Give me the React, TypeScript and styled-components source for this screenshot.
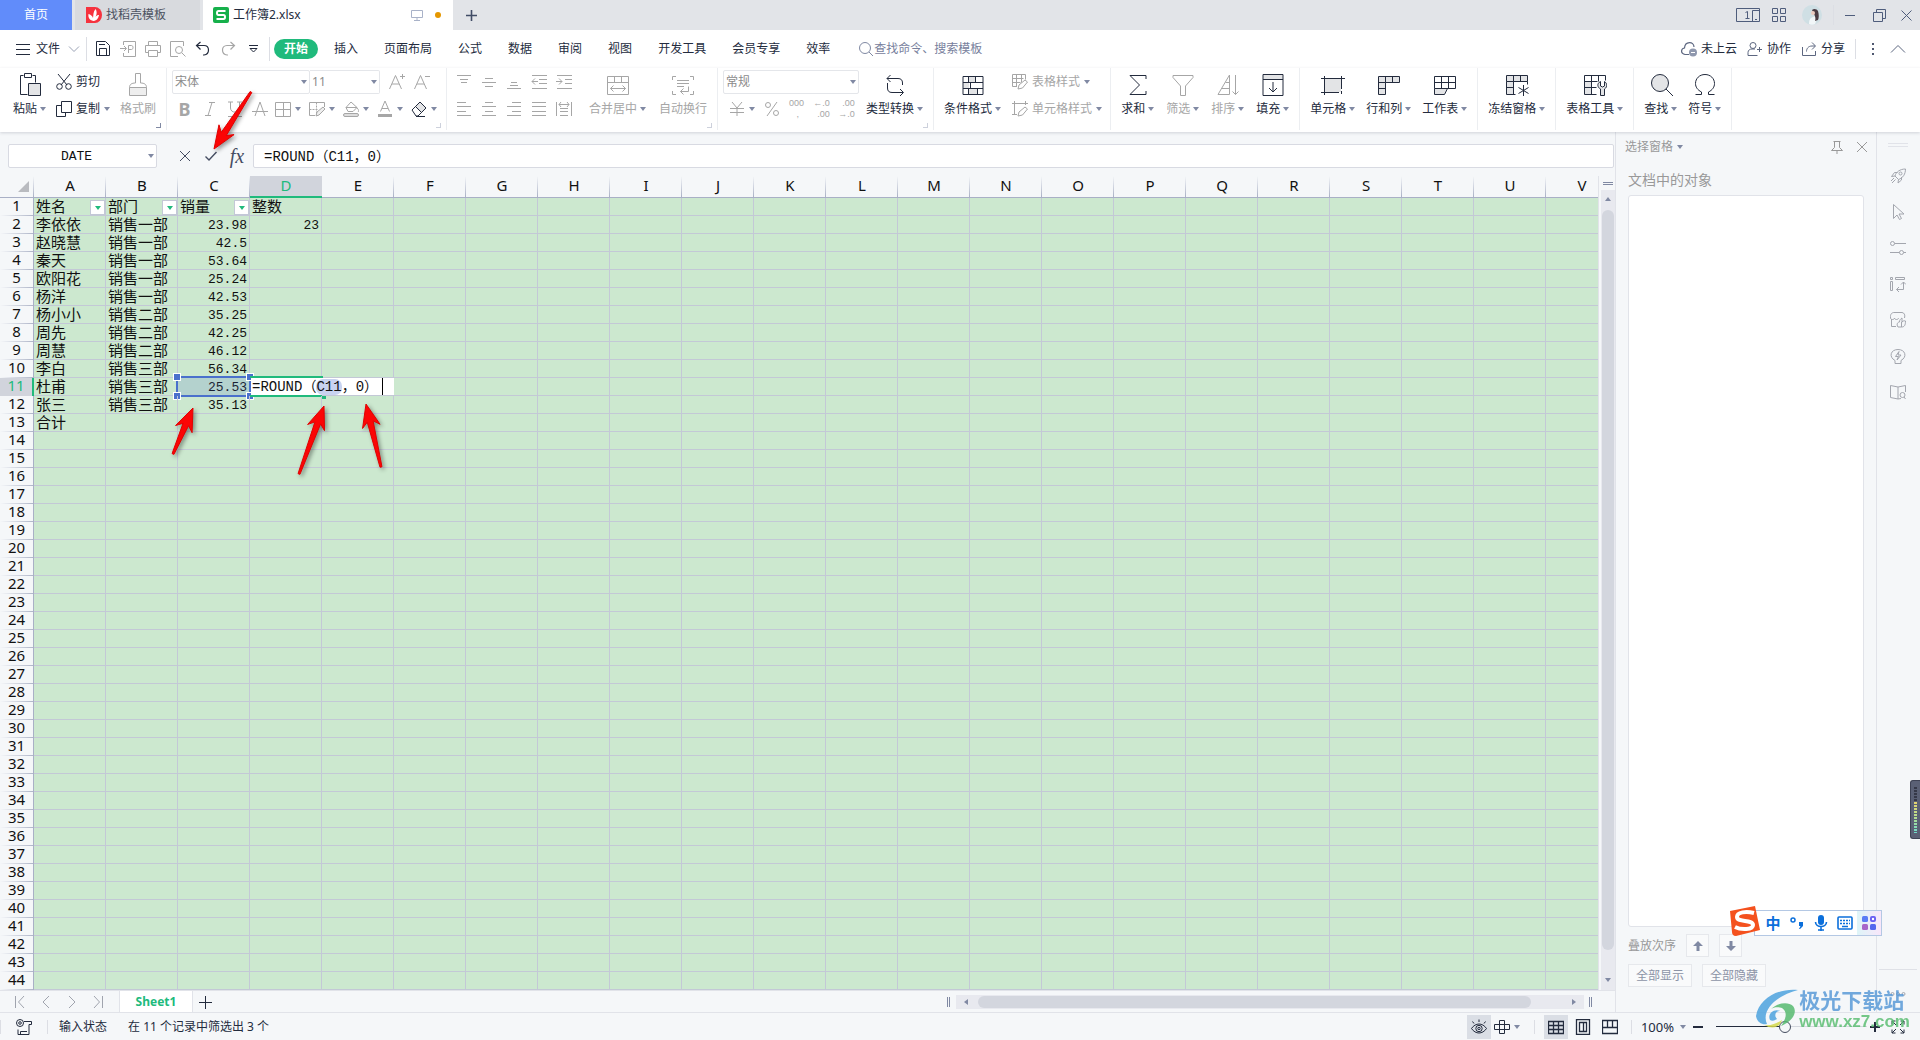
import React from "react";
import styled, { createGlobalStyle, css } from "styled-components";

const ui = `"Noto Sans", "Noto Sans CJK SC", sans-serif`;
const mono = `"Liberation Mono", "Noto Sans CJK SC", monospace`;
const ink = "#232b3d";
const muted = "#a6a6a6";
const green = "#20ba7c";
const line = "#c3c8d6";
const soft = "#e1e3e9";
const slate = "#8089a3";

const GlobalStyle = createGlobalStyle`
  *, *::before, *::after { box-sizing: border-box; }
  body { margin: 0; background: #f5f7f9; overflow: hidden; }
  button, input, select { font: inherit; color: inherit; margin: 0; }
  button { border: 0; padding: 0; background: none; }
  svg { display: block; flex: none; }
`;

const Page = styled.div`
  position: relative;
  display: flex;
  flex-direction: column;
  height: 100vh;
  overflow: hidden;
  background: #f5f7f9;
  color: ${ink};
  font-family: ${ui};
  font-size: 12px;
  line-height: 16px;
`;

/* ---------- icons ---------- */

type IconProps = { w?: number; h?: number; color?: string; children: React.ReactNode };
const Icon = ({ w = 16, h, color = "currentColor", children }: IconProps) => (
  <svg width={w} height={h ?? w} viewBox={`0 0 ${w} ${h ?? w}`} fill="none" stroke={color} strokeWidth="1" aria-hidden="true">
    {children}
  </svg>
);
const Caret = ({ color = slate }: { color?: string }) => (
  <Icon w={6} h={4}>
    <path d="M0 0h6L3 4z" fill={color} stroke="none" />
  </Icon>
);
const Shade = "#e3e4e6";

const big: Record<string, React.ReactNode> = {
  paste: (
    <>
      <path d="M5.500 3.500H2.500v19h7M14.500 3.500h3v7M6.500 1.500h7v4h-7z" />
      <path d="M10.500 11.500h12v12h-12z" fill={Shade} />
    </>
  ),
  brush: (
    <>
      <path d="M3.500 15.500h17v8h-17z" fill="#eee" />
      <path d="M3.500 15.500c0-3 2-4.500 6-4.500V1.500h5V11c4 0 6 1.500 6 4.500" />
    </>
  ),
  merge: <path d="M1.500 4.500h21v18h-21zM1.500 10.500h21M8.500 4.500v6M15.500 4.500v6M4.500 16.500h15M7.500 13.500l-3 3 3 3M16.500 13.500l3 3-3 3" />,
  wrap: (
    <path d="M5 4.500H1.500V8M19 4.500h3.500V8M5 22.500H1.500V19M19 22.500h3.500V19M6 8.500h12M6 11.500h12M6 14.500h7M17.500 14.500v5H9.500M12.500 16.500l-3 3 3 3" />
  ),
  convert: <path d="M7.500 3l-3.500 3.500L7.500 10M4 6.500h11c3 0 4.500 1.500 4.500 4.500v2M4.500 11v5c0 3 1.500 4.500 4.500 4.500h11M17 17l3.500 3.500L17 24" />,
  cond: (
    <>
      <path d="M7 5h7v5H7zM2 11h6v5H2zM7 17h9v5H7z" fill={Shade} stroke="none" />
      <path d="M2 4.500h20v18H2zM2 10.500h20M2 16.500h20M7.500 4.500v6M14.500 4.500v6M9.500 10.500v6M16.500 16.500v6M7.500 16.500v6" stroke="#232b3d" />
    </>
  ),
  sum: <path d="M20 7V3.500H4L13.500 13 4 22.500h16V19" />,
  filter: <path d="M2 3.500h20v2L14.500 14v9.500h-5V14L2 5.500z" />,
  sort: <path d="M13.500 3v19.500H2zM9.500 10.500h4M6 16.500h7.500M19.500 3v19.500M16.500 19.500l3 3 3-3" />,
  fill: (
    <>
      <path d="M2 3h20v5H2z" fill={Shade} stroke="none" />
      <path d="M2 2.500h20v21H2zM2 7.500h20M12 10v10M8 16l4 4 4-4" />
    </>
  ),
  cell: (
    <>
      <path d="M4 6h16v14H4z" fill={Shade} stroke="none" />
      <path d="M3.500 4v19M20.500 4v13M0 6.500h24M0 20.500h18M20.500 19v3" />
    </>
  ),
  rowcol: (
    <>
      <path d="M1 5h21v5H8v12H1z" fill={Shade} stroke="none" />
      <path d="M1.500 4.500h21v6h-14v12h-7zM8.500 4.500v6h-7M15.500 4.500v6M1.500 16.500h7" />
    </>
  ),
  sheet: (
    <>
      <path d="M2 17h12l-2 5H2z" fill={Shade} stroke="none" />
      <path d="M1.500 4.500h21v12h-21zM1.500 10.500h21M8.500 4.500v12M15.500 4.500v12M1.500 16.500v6h10l3-6" />
    </>
  ),
  freeze: (
    <>
      <path d="M1 4h21v5H8v13H1z" fill={Shade} stroke="none" />
      <path d="M1.500 3.500h21v6h-21zM1.500 9.500v13h9M8.500 3.500v19M15.500 3.500v6M1.500 15.500h7M22.500 9.500v3M18.500 13v11M13.500 15.500l10 6M23.500 15.500l-10 6" />
    </>
  ),
  tools: (
    <>
      <path d="M2 10h6v12H2z" fill={Shade} stroke="none" />
      <path d="M1.500 3.500h21v5M1.500 3.500v19h12M1.500 9.500h13M8.500 3.500v19M15.500 3.500v6M1.500 15.500h12" />
      <path d="M17.500 9.500c-4 2-3 6 0 7.500v6.500h4V17c3-2 3-5.500 0-7.500v4.500l-2 1-2-1z" fill={Shade} />
    </>
  ),
  find: (
    <>
      <circle cx="11" cy="11" r="8.500" fill={Shade} />
      <path d="M17 17l7 7" />
    </>
  ),
  omega: <path d="M2.500 22.500h6v-2.500C4.500 18 2.500 15 2.500 11.500c0-5 4-9 9.500-9s9.500 4 9.500 9c0 3.500-2 6.500-6 8.500v2.500h6" />,
};

const small: Record<string, React.ReactNode> = {
  cut: (
    <>
      <path d="M2 0l9 11M14 0L5 11" />
      <circle cx="3.500" cy="12.500" r="2.800" />
      <circle cx="12.500" cy="12.500" r="2.800" />
    </>
  ),
  copy: <path d="M5.500.500h10v11h-10zM5.500 4.500h-5v11h9v-4" />,
  italic: <path d="M7 1.500h6M3 14.500h6M10 1.500l-4 13" />,
  underline: <path d="M3.500 1v6c0 5.500 9 5.500 9 0V1M1 1h5M10 1h5M1 15.500h14" />,
  strike: <path d="M3 15L8 1l5 14M0 10.500h16" />,
  border: <path d="M.500 1.500h15v14H.500zM8.500 1.500v14M.500 8.500h15" />,
  edit: (
    <>
      <path d="M15.500 6V1.500H.500v13H6" />
      <path d="M.500 8.500h9M7.500 1.500v13" strokeDasharray="2 1" />
      <path d="M7 15l1-4 6-5 2 2-6 6z" fill="#eee" />
    </>
  ),
  bucket: (
    <>
      <path d="M3 6.500L8 1l6 5.500-4 4H5zM3 6.500h11M14 7c2 2 2 3 1 4" />
      <rect x=".5" y="12.500" width="15" height="3" rx="1.500" fill="#ddd" />
    </>
  ),
  fontcolor: (
    <>
      <path d="M3.500 10.500L8 0l4.500 10.500M5 7.500h6" />
      <path d="M1 13h14v3H1z" fill="#a6a6a6" stroke="none" />
    </>
  ),
  eraser: (
    <>
      <path d="M1 9l8-8 6 6-8 8H5z" />
      <path d="M4.500 5.500L9 1l6 6-4.500 4.500z" fill={Shade} />
      <path d="M5 15.500h9" />
    </>
  ),
  bigger: <path d="M.500 15L6.500 1.500l6 13.500M3 10h7M11 2.500h5M13.500 0v5" />,
  smaller: <path d="M.500 15L6.500 1.500l6 13.500M3 10h7M11 2.500h5" />,
  vtop: <path d="M1 1.500h14M4 5.500h8M5 8.500h6" />,
  vmid: <path d="M4 4.500h8M1 8.500h14M4 12.500h8" />,
  vbot: <path d="M5 8.500h6M4 11.500h8M1 14.500h14" />,
  outdent: <path d="M1 1.500h15M8 5.500h8M8 9.500h8M1 14.500h15M7 7.500H1M4 4.500l-3 3 3 3" />,
  indent: <path d="M1 1.500h15M9 5.500h7M9 9.500h7M1 14.500h15M0 7.500h6M3 4.500l3 3-3 3" />,
  left: <path d="M1 1.500h9M1 5.500h14M1 10.500h9M1 14.500h14" />,
  center: <path d="M4 1.500h8M1 5.500h14M4 10.500h8M1 14.500h14" />,
  right: <path d="M6 1.500h9M1 5.500h14M6 10.500h9M1 14.500h14" />,
  justify: <path d="M1 1.500h14M1 5.500h14M1 10.500h14M1 14.500h14" />,
  spread: <path d="M.500 1v14M15.500 1v14M4 7.500h8M4 10.500h8M4 14.500h8M3 3.500h10M5 1L3 3.500 5 6M11 1l2 2.500L11 6" />,
  yen: <path d="M3 1l5 6 5-6M8 7v8M1 7.500h14M1 11.500h14" />,
  percent: (
    <>
      <path d="M13 1L3 15" />
      <circle cx="4" cy="4" r="2.500" />
      <circle cx="12" cy="12" r="2.500" />
    </>
  ),
  tablestyle: <path d="M.500.500h13v5M.500.500v12H5M.500 4.500h11M.500 8.500h8M4.500.500v12M9.500.500v8M6 15l1-4 6-5 2.500 2-5 6z" />,
  cellstyle: <path d="M2.500 0v14M0 2.500h16M13.500 0v4M0 13.500h5M6 15l1-4 6-5 2.500 2-5 6z" />,
  save: <path d="M1.500.500h9l4 4v10h-13zM4.500 14.500v-7h7v7M4 3.500h6" />,
  export: <path d="M3.500 4V.500h12v15h-12V12M0 7.500h6M4 5l2.500 2.500L4 10M8.500 12V4.500h3c2 0 2 4 0 4h-3" />,
  print: <path d="M3.500 4.500v-4h9v4M3.500 11.500h-3v-7h15v7h-3M3.500 9.500h9v6h-9z" />,
  preview: (
    <>
      <path d="M13.500 5V.500H.500v15H8" />
      <circle cx="9" cy="9" r="3.500" />
      <path d="M12 12l3.500 3.500" />
    </>
  ),
  undo: <path d="M5.500 1l-4 3.500 4 4M1.500 4.500H9c6 0 6 9 0 9.500H8" strokeWidth="1.200" />,
  redo: <path d="M10.500 1l4 3.500-4 4M14.500 4.500H7c-6 0-6 9 0 9.500h1" strokeWidth="1.200" />,
  search: (
    <>
      <circle cx="7" cy="7" r="5.500" />
      <path d="M11 11l4 4" />
    </>
  ),
  cloud: (
    <>
      <path d="M8 13.500H4c-5-1-4-6-.500-6.500C4 0 13 0 13 6" strokeWidth="1.200" />
      <circle cx="12" cy="11.500" r="4" fill="#8f98ae" stroke="none" />
      <path d="M10 11.500h4" stroke="#fff" />
    </>
  ),
  person: (
    <>
      <circle cx="6" cy="4.500" r="3" />
      <path d="M10.500 14.500h-9.500v-3c0-2.500 2-3.500 4-3.500h3M10 8.500h5M12.500 6v5" />
    </>
  ),
  share: <path d="M1.500 6v8.500h13V10M11 1.500l3.500 3.500L11 8.500M14 5H11C7 5 5.500 8 5.500 10.500" />,
  rocket: (
    <>
      <path d="M5 8c1-4 5-7 10.500-7C15.500 6 13 10 8.500 11.500zM5 8L1.500 8.500l3-4h3M8.500 11.500L8 15l3.500-3V9M4 10l-3 3M5.500 11.500L2 15" />
      <circle cx="10.500" cy="5.500" r="1.500" />
    </>
  ),
  pointer: <path d="M3.500.500v14l3.500-3.500 2.500 4.500 2-1-2.500-4.500h5z" />,
  sliders: (
    <>
      <circle cx="2.500" cy="3.500" r="2" />
      <path d="M4.500 3.500H16M0 12.500h9.500M13.500 12.500H16" />
      <circle cx="11.500" cy="12.500" r="2" />
    </>
  ),
  layout: <path d="M.500 1.500h2v2h-2zM5.500 1.500h9v2h-9zM.500 5.500h2v9h-2zM13.500 6v7.500h-7M11 8.500L13.500 6 16 8.500M9 11l-2.500 2.500L9 16" />,
  shop: <path d="M1.500 7v7.500H6M.500 6C0 2 2 .500 4 .500h8C14 .500 15.500 3 14.500 6M.500 6c0 2 4 2 4 0 0 2 4 2 4 0M8 15c-2-3 0-5 1.500-5 0-2 1-3 2.500-4v4c2-2 3-1 3.500-1 0 4-1 6-4 6zM11.500 15v-5" />,
  bulb: (
    <>
      <path d="M5 12.500C-1.500 9 .500 1.500 8 1.500s9.500 7.500 3 11v3H5z" />
      <path d="M9 3.500L5.500 8.500h3L7 12l4-5H8z" />
    </>
  ),
  book: (
    <>
      <path d="M8 3L.500 1.500v12L8 15l3-.500M8 3v12M8 3l7.500-1.500V8" />
      <circle cx="12.500" cy="11" r="2.500" />
      <path d="M14 13l1.500 2" />
    </>
  ),
  close: <path d="M3 3l10 10M13 3L3 13" />,
  pin: <path d="M4.500 2.500h7M5.500 2.500v6l-3 3h11l-3-3v-6M8 11.500V15" />,
  check: <path d="M2.500 8.500L6 12l7.500-8" strokeWidth="1.400" />,
  up: <path d="M8 3l5 5h-3.500v5h-3V8H3z" fill="#8089a3" stroke="none" />,
  down: <path d="M8 13l5-5H9.500V3h-3v5H3z" fill="#8089a3" stroke="none" />,
  first: <path d="M3.500 2v12M12 2L6.500 8l5.500 6" />,
  prev: <path d="M11 2L5 8l6 6" />,
  next: <path d="M5 2l6 6-6 6" />,
  last: <path d="M12.500 2v12M4 2l5.500 6L4 14" />,
  plus: <path d="M8.500 2v13M2 8.500h13" />,
  chevron: <path d="M3 5.500l5 5 5-5" />,
  chevronUp: <path d="M1 11.500l7-7 7 7" />,
  record: (
    <>
      <circle cx="4" cy="4" r="3.500" />
      <circle cx="4" cy="4" r="1.300" />
      <path d="M8 2.500h7.500v3H13v10H4.500v-3H11" />
      <path d="M2 10.500v5h3" />
    </>
  ),
  eye: (
    <>
      <path d="M.500 9.500c4-6 11-6 15 0-4 6-11 6-15 0z" />
      <circle cx="8" cy="9.500" r="3.200" />
      <circle cx="8" cy="9.500" r="1.200" />
      <path d="M8 3V.500M3 4.500L1.500 2.500M13 4.500l1.500-2" />
    </>
  ),
  cross: <path d="M5.500 1.500h5v13h-5zM.500 5.500h15v5H.500z" />,
  grid: <path d="M.500 2.500h15v12H.500zM.500 6.500h15M.500 10.500h15M5.500 2.500v12M10.500 2.500v12" strokeWidth="1.300" />,
  reading: <path d="M1.500.500h13v15h-13zM4.500 3.500h7v9h-7zM8.500 3.500v9" strokeWidth="1.300" />,
  pagebreak: <path d="M.500 1.500h15v13H.500zM5.500 1.500v7h5v-7M.500 8.500h5M10.500 8.500h5" strokeWidth="1.300" />,
  expand: <path d="M2 2l4 4M2 5.500V2h3.500M14 2l-4 4M14 5.500V2h-3.500M2 14l4-4M2 10.500V14h3.500M14 14l-4-4M14 10.500V14h-3.500" />,
};

const B = ({ name, color }: { name: string; color?: string }) => <Icon w={24} color={color}>{big[name]}</Icon>;
const S = ({ name, color }: { name: string; color?: string }) => <Icon w={16} color={color}>{small[name]}</Icon>;

/* ---------- title bar ---------- */

const TitleBar = styled.header`
  display: flex;
  height: 30px;
  flex: none;
  background: #e2e4e8;
`;
const DocTab = styled.button<{ $kind?: "home" | "active" }>`
  display: flex;
  align-items: center;
  gap: 4px;
  height: 30px;
  width: 125px;
  padding: 0 11px;
  margin-right: 3px;
  background: #d8dade;
  color: #4c5261;
  ${(p) => p.$kind === "home" && css`width: 72px; justify-content: center; background: #618cfa; color: #fff;`}
  ${(p) => p.$kind === "active" && css`width: 250px; padding: 0 12px 0 10px; margin-right: 0; background: #fff; color: ${ink};`}
`;
const Dot = styled.span`
  width: 6px;
  height: 6px;
  margin-left: 8px;
  border-radius: 50%;
  background: #e59700;
`;
const Grow = styled.span`
  flex: 1;
`;
const Square = styled.button<{ $w?: number; $h?: number; $on?: boolean; $color?: string }>`
  display: flex;
  align-items: center;
  justify-content: center;
  flex: none;
  width: ${(p) => p.$w ?? 24}px;
  height: ${(p) => p.$h ?? 24}px;
  color: ${(p) => p.$color ?? "inherit"};
  background: ${(p) => (p.$on ? "#dadee5" : "none")};
`;
const WindowTools = styled.div`
  display: flex;
  align-items: center;
  margin-left: auto;
  color: #4f5d7c;
`;
const Divider = styled.span<{ $h?: number; $gap?: number }>`
  flex: none;
  width: 1px;
  height: ${(p) => p.$h ?? 24}px;
  margin: 0 ${(p) => p.$gap ?? 4}px;
  background: #dcdee4;
`;

/* ---------- menu row ---------- */

const MenuRow = styled.nav`
  display: flex;
  align-items: center;
  flex: none;
  height: 38px;
  padding: 0 14px 0 16px;
  background: #fff;
`;
const FileButton = styled.button`
  display: flex;
  align-items: center;
  gap: 6px;
`;
const QuickBar = styled.div`
  display: flex;
  gap: 1px;
`;
const MenuTabs = styled.div`
  display: flex;
  gap: 6px;
`;
const MenuTab = styled.button<{ $on?: boolean }>`
  height: 20px;
  padding: 0 10px;
  border-radius: 10px;
  line-height: 20px;
  ${(p) => p.$on && css`background: ${green}; color: #fff; font-weight: 700;`}
`;
const Search = styled.label`
  display: flex;
  align-items: center;
  margin-left: 18px;
  color: #8089a3;
`;
const SearchInput = styled.input`
  width: 140px;
  border: 0;
  padding: 0;
  outline: 0;
  background: none;
  &::placeholder { color: #77809c; opacity: 1; }
`;
const TextButton = styled.button<{ $color?: string }>`
  display: flex;
  align-items: center;
  gap: 4px;
  height: 24px;
  white-space: nowrap;
  color: ${(p) => p.$color ?? "inherit"};
`;
const AccountTools = styled.div`
  display: flex;
  align-items: center;
  gap: 10px;
  margin-left: auto;
`;

/* ---------- ribbon ---------- */

const Ribbon = styled.div`
  position: relative;
  z-index: 1;
  display: flex;
  flex: none;
  height: 64px;
  padding-bottom: 2px;
  background: #fff;
  box-shadow: 0 1px 3px rgba(40, 50, 70, 0.18);
`;
const Group = styled.div<{ $left?: number; $right?: number; $gap?: number }>`
  position: relative;
  display: flex;
  gap: ${(p) => p.$gap ?? 11}px;
  padding: 0 ${(p) => p.$right ?? 10}px 0 ${(p) => p.$left ?? 10}px;
  border-right: 1px solid #eceef1;
`;
const Launcher = styled.span<{ $dark?: boolean }>`
  position: absolute;
  right: 5px;
  bottom: 2px;
  width: 5px;
  height: 5px;
  border: solid ${(p) => (p.$dark ? slate : "#cdd1dc")};
  border-width: 0 1px 1px 0;
`;
const BigButton = styled.button<{ $off?: boolean }>`
  display: flex;
  flex-direction: column;
  align-items: center;
  gap: 5px;
  padding-top: 4px;
  align-self: flex-start;
  white-space: nowrap;
  color: ${(p) => (p.$off ? muted : ink)};
`;
const BigLabel = styled.span`
  display: flex;
  align-items: center;
  gap: 3px;
`;
const Rows = styled.div`
  display: grid;
  align-content: start;
  grid-auto-rows: 24px;
  gap: 3px;
  padding-top: 2px;
`;
const Row = styled.div`
  display: flex;
  align-items: center;
  color: ${muted};
`;
const SplitButton = styled.button<{ $w?: number; $color?: string }>`
  display: flex;
  align-items: center;
  gap: 4px;
  width: ${(p) => p.$w ?? 34}px;
  height: 24px;
  padding-left: ${(p) => (p.$w ? 6 : 3)}px;
  color: ${(p) => p.$color ?? muted};
`;
const Bold = styled.span`
  font-size: 18px;
  font-weight: 700;
`;
const Decimal = styled.span`
  display: grid;
  justify-items: end;
  font: 9px/11px "Liberation Sans", "DejaVu Sans", sans-serif;
`;
const Field = styled.span<{ $w: number }>`
  position: relative;
  display: flex;
  align-items: center;
  width: ${(p) => p.$w}px;
  height: 24px;
  border: 1px solid #e4e6ea;
  border-radius: 2px;
  color: #8b8b8b;
  & + & { border-left: 0; border-radius: 0 2px 2px 0; }
  & > svg { position: absolute; right: 2px; }
`;
const Select = styled.select`
  width: 100%;
  height: 22px;
  padding: 0 2px;
  border: 0;
  outline: 0;
  appearance: none;
  background: none;
`;

const BigItem = ({ icon, label, off, caret = true }: { icon: string; label: string; off?: boolean; caret?: boolean }) => (
  <BigButton $off={off}>
    <B name={icon} />
    <BigLabel>
      {label}
      {caret && <Caret />}
    </BigLabel>
  </BigButton>
);
const Drop = ({ w, label, value }: { w: number; label: string; value: string }) => (
  <Field $w={w}>
    <Select aria-label={label} defaultValue={value}>
      <option>{value}</option>
    </Select>
    <Caret />
  </Field>
);

/* ---------- workspace ---------- */

const Workspace = styled.div`
  display: flex;
  flex: 1;
  min-height: 0;
`;
const SheetArea = styled.main`
  display: flex;
  flex-direction: column;
  flex: 1;
  min-width: 0;
`;
const FormulaBar = styled.div`
  display: flex;
  align-items: center;
  flex: none;
  height: 44px;
  padding: 4px 1px 0 8px;
`;
const NameBox = styled.label`
  position: relative;
  display: flex;
  align-items: center;
  flex: none;
  width: 149px;
  & > svg { position: absolute; right: 3px; }
`;
const BoxInput = styled.input<{ $name?: boolean }>`
  width: 100%;
  min-width: 0;
  height: 24px;
  padding: 0 10px 2px;
  border: 1px solid #d8dae2;
  border-radius: 2px;
  outline: 0;
  background: #fff;
  color: #111;
  font-family: ${mono};
  font-size: ${(p) => (p.$name ? 13 : 14)}px;
  ${(p) => p.$name && css`text-align: center; padding: 0 22px 0 10px;`}
`;
const FormulaButtons = styled.div`
  display: flex;
  flex: none;
  width: 96px;
  padding-left: 15px;
  color: #454d62;
`;
const Fx = styled.span`
  font: italic 20px/24px "Liberation Serif", serif;
`;
const GridRow = styled.div`
  display: flex;
  flex: 1;
  min-height: 0;
`;
const GridView = styled.div`
  flex: 1;
  min-width: 0;
  overflow: hidden;
  border-right: 1px solid ${soft};
`;
const Grid = styled.table`
  width: 1618px;
  table-layout: fixed;
  border-collapse: separate;
  border-spacing: 0;
  background: #cce8cf;
`;
const ColHead = styled.th<{ $on?: boolean }>`
  height: 22px;
  padding: 0;
  border-bottom: 1px solid #a9b0c6;
  background: linear-gradient(#f5f7f9, #aab1c6) right / 1px 100% no-repeat, #f5f7f9;
  font-size: 15px;
  font-weight: 400;
  line-height: 18px;
  vertical-align: top;
  color: #111;
  ${(p) => p.$on && css`background: #d1d4dc; border-bottom: 2px solid ${green}; color: ${green};`}
`;
const RowHead = styled.th<{ $on?: boolean }>`
  height: 18px;
  padding: 0;
  border-right: 1px solid #a9b0c6;
  background: linear-gradient(90deg, #f5f7f9, #b0b6c9) bottom / 100% 1px no-repeat, #f5f7f9;
  font-size: 15px;
  font-weight: 400;
  line-height: 15px;
  vertical-align: top;
  color: #111;
  ${(p) => p.$on && css`background: #d1d4dc; border-right: 2px solid ${green}; color: ${green};`}
`;
const Cell = styled.td<{ $num?: boolean }>`
  position: relative;
  height: 18px;
  padding: 0 2px;
  border: solid ${line};
  border-width: 0 1px 1px 0;
  white-space: nowrap;
  vertical-align: top;
  color: #111;
  font: 15px/15px "Noto Sans CJK SC", sans-serif;
  ${(p) => p.$num && css`padding-top: 2px; font: 13px/15px ${mono}; text-align: right;`}
`;
const FilterButton = styled.button`
  position: absolute;
  right: 0;
  top: 2px;
  display: flex;
  align-items: center;
  justify-content: center;
  width: 15px;
  height: 15px;
  border: 1px solid ${line};
  background: #fff;
`;
const RefFrame = styled.span`
  position: absolute;
  inset: -2px -2px -2px -2px;
  border: 2px solid #4a70cc;
  background: rgba(74, 112, 204, 0.18);
`;
const Knob = styled.i<{ $x: "left" | "right"; $y: "top" | "bottom" }>`
  position: absolute;
  ${(p) => p.$x}: -4px;
  ${(p) => p.$y}: -4px;
  width: 6px;
  height: 6px;
  background: #4a70cc;
  outline: 1px solid #fff;
`;
const EditFrame = styled.span`
  position: absolute;
  inset: -2px -2px -2px 0;
  border: solid ${green};
  border-width: 2px 0;
  &::after {
    content: "";
    position: absolute;
    right: -3px;
    bottom: -4px;
    width: 5px;
    height: 5px;
    background: ${green};
  }
`;
const Editor = styled.span`
  position: absolute;
  z-index: 1;
  left: 1px;
  top: 0;
  width: 143px;
  height: 17px;
  padding-left: 1px;
  background: #fff;
  font: 14px/19px ${mono};
`;
const Ref = styled.span`
  border-radius: 7px;
  background: #c8d3f0;
  color: #111;
`;
const TextCursor = styled.i`
  display: inline-block;
  width: 1px;
  height: 17px;
  margin-left: 4px;
  vertical-align: top;
  background: #000;
`;
const VScroll = styled.div`
  display: flex;
  flex-direction: column;
  align-items: center;
  flex: none;
  width: 16px;
  padding-left: 2px;
`;
const Grip = styled.span<{ $vertical?: boolean }>`
  flex: none;
  width: 10px;
  height: 3px;
  margin: 6px 0 5px;
  border: solid ${slate};
  border-width: 1px 0;
  ${(p) => p.$vertical && css`width: 3px; height: 10px; margin: 0 6px 0 5px; border-width: 0 1px;`}
`;
const VTrack = styled.div`
  display: flex;
  flex-direction: column;
  align-items: center;
  gap: 9px;
  flex: 1;
  width: 14px;
  padding: 7px 0 8px;
  background: #e8e9ef;
`;
const VThumb = styled.span`
  flex: 1;
  width: 12px;
  margin-bottom: 19px;
  border-radius: 6px;
  background: #d3d6de;
`;
const SheetBar = styled.div`
  display: flex;
  align-items: center;
  flex: none;
  height: 22px;
  padding-left: 8px;
  border-top: 1px solid ${soft};
`;
const SheetNav = styled.div`
  display: flex;
  gap: 2px;
  width: 111px;
  color: #a0a4ae;
`;
const SheetTab = styled.button`
  width: 74px;
  height: 21px;
  border: solid ${soft};
  border-width: 0 1px;
  background: #fff;
  color: ${green};
  font-weight: 700;
`;
const HScroll = styled.div`
  display: flex;
  align-items: center;
  gap: 10px;
  width: 628px;
  height: 14px;
  padding: 0 8px;
  background: #e8e9ef;
`;
const HThumb = styled.span`
  flex: 1;
  height: 12px;
  margin-right: 31px;
  border-radius: 6px;
  background: #d3d6de;
`;

/* ---------- selection pane ---------- */

const Pane = styled.aside`
  display: flex;
  flex-direction: column;
  flex: none;
  width: 262px;
  padding: 5px 12px 25px;
  border: solid ${soft};
  border-width: 0 1px;
  color: #999;
`;
const PaneHead = styled.div`
  display: flex;
  align-items: center;
  gap: 1px;
  height: 20px;
  margin: 0 -10px 0 -3px;
`;
const PaneTitle = styled.h2`
  margin: 14px 0 6px;
  font-size: 14px;
  font-weight: 400;
  line-height: 18px;
`;
const ObjectList = styled.div`
  flex: 1;
  border: 1px solid ${soft};
  border-radius: 3px;
  background: #fff;
`;
const PaneRow = styled.div`
  display: flex;
  align-items: center;
  gap: 10px;
  margin-top: 7px;
`;
const PaneButton = styled.button<{ $w?: number }>`
  display: flex;
  align-items: center;
  justify-content: center;
  width: ${(p) => p.$w ?? 64}px;
  height: 23px;
  border: 1px solid #e6e8ec;
  background: #f9fafb;
  color: #8c93a6;
`;
const SideBar = styled.aside`
  display: flex;
  flex-direction: column;
  align-items: center;
  flex: none;
  width: 43px;
  padding: 11px 2px 10px 0;
  color: #a3a6ae;
`;
const Handle = styled.span`
  width: 20px;
  height: 4px;
  margin-bottom: 11px;
  border: solid ${soft};
  border-width: 1px 0;
`;
const SideRule = styled.span`
  width: 38px;
  height: 1px;
  margin-top: auto;
  margin-bottom: 16px;
  background: #dfe1e7;
`;

/* ---------- status bar ---------- */

const StatusBar = styled.footer`
  display: flex;
  align-items: center;
  flex: none;
  height: 28px;
  padding: 0 7px 0 0;
  border-top: 1px solid ${soft};
`;
const Zoom = styled.button`
  display: flex;
  align-items: center;
  gap: 6px;
  font-size: 13px;
`;
const Slider = styled.input`
  width: 151px;
  height: 16px;
  margin: 0 0 0 6px;
  appearance: none;
  background: linear-gradient(90deg, ${ink} 46%, #d4d7de 46%) center / 100% 1px no-repeat;
  &::-webkit-slider-thumb {
    appearance: none;
    width: 12px;
    height: 12px;
    border: 1px solid #444c5f;
    border-radius: 50%;
    background: #f5f7f9;
  }
`;

/* ---------- floating layers ---------- */

const ImeBar = styled.div`
  position: absolute;
  z-index: 3;
  right: 38px;
  bottom: 104px;
  display: flex;
  align-items: center;
  height: 26px;
  border: 1px solid #b4c8e4;
  background: #fff;
`;
const ImeLogo = styled.span`
  margin: -6px 0 -4px -28px;
`;
const ImeKey = styled(Square)`
  color: #0b6fdb;
  font-size: 15px;
  font-weight: 700;
`;
const ImeApps = styled(ImeKey)`
  background: linear-gradient(90deg, #def5f8, #f8e6fa);
`;
const SideWidget = styled.div`
  position: absolute;
  z-index: 3;
  right: 0;
  bottom: 201px;
  width: 10px;
  height: 59px;
  padding: 6px 3px;
  border: 1px solid #3e4254;
  border-right: 0;
  border-radius: 3px 0 0 3px;
  background: #5a6075;
`;
const Meter = styled.span`
  display: block;
  height: 46px;
  background: repeating-linear-gradient(transparent 0 2px, #5a6075 2px 3px), linear-gradient(#353848 30%, #e8d16c 30%, #b6dd8d 65%, #6edacb);
`;
const Watermark = styled.div`
  position: absolute;
  z-index: 4;
  right: 10px;
  bottom: 8px;
  display: flex;
  align-items: center;
  pointer-events: none;
  opacity: 0.85;
`;
const WatermarkText = styled.div`
  display: grid;
  color: #5b9bd8;
  font: 700 21px/25px "Noto Sans CJK SC", sans-serif;
`;
const WatermarkUrl = styled.span`
  color: #5ebf75;
  font: 700 17px/20px "Liberation Sans", sans-serif;
`;
const Notes = styled.svg`
  position: absolute;
  z-index: 5;
  left: 0;
  top: 0;
  width: 440px;
  height: 500px;
  pointer-events: none;
  filter: drop-shadow(2px 2px 2px rgba(0, 0, 0, 0.4));
`;

type Point = [number, number];
const Arrow = ({ tail, tip }: { tail: Point; tip: Point }) => {
  const dx = tail[0] - tip[0];
  const dy = tail[1] - tip[1];
  const len = Math.hypot(dx, dy);
  const at = (along: number, side: number) =>
    `${tip[0] + (dx * along - dy * side) / len},${tip[1] + (dy * along + dx * side) / len}`;
  const points = [at(0, 0), at(23, 9), at(18, 3), at(len, 1), at(len, -1), at(18, -3), at(23, -9)].join(" ");
  return <polygon points={points} fill="#fb0505" stroke="#e00000" strokeWidth="1" />;
};

const columns = "ABCDEFGHIJKLMNOPQRSTUV".split("");
const data: string[][] = [
  ["姓名", "部门", "销量", "整数"],
  ["李依依", "销售一部", "23.98", "23"],
  ["赵晓慧", "销售一部", "42.5"],
  ["秦天", "销售一部", "53.64"],
  ["欧阳花", "销售一部", "25.24"],
  ["杨洋", "销售一部", "42.53"],
  ["杨小小", "销售二部", "35.25"],
  ["周先", "销售二部", "42.25"],
  ["周慧", "销售二部", "46.12"],
  ["李白", "销售三部", "56.34"],
  ["杜甫", "销售三部", "25.53"],
  ["张三", "销售三部", "35.13"],
  ["合计"],
];
const rowCount = 44;

const SheetCell = ({ r, c }: { r: number; c: number }) => {
  const value = data[r]?.[c] ?? "";
  const numeric = r > 0 && c > 1;
  return (
    <Cell $num={numeric && value !== ""}>
      {value}
      {r === 0 && c < 3 && (
        <FilterButton aria-label={`筛选 ${value}`}>
          <Caret color={green} />
        </FilterButton>
      )}
      {r === 10 && c === 2 && (
        <RefFrame>
          <Knob $x="left" $y="top" />
          <Knob $x="right" $y="top" />
          <Knob $x="left" $y="bottom" />
          <Knob $x="right" $y="bottom" />
        </RefFrame>
      )}
      {r === 10 && c === 3 && (
        <>
          <EditFrame />
          <Editor>
            =ROUND（<Ref>C11</Ref>，0）
            <TextCursor />
          </Editor>
        </>
      )}
    </Cell>
  );
};

const Ribbons = () => (
  <Ribbon>
    <Group $left={13} $gap={10}>
      <BigItem icon="paste" label="粘贴" />
      <Rows>
        <TextButton><S name="cut" />剪切</TextButton>
        <TextButton><S name="copy" />复制<Caret /></TextButton>
      </Rows>
      <BigItem icon="brush" label="格式刷" off caret={false} />
      <Launcher $dark />
    </Group>
    <Group $left={5} $right={4}>
      <Rows>
        <Row>
          <Drop w={138} label="字体" value="宋体" />
          <Drop w={70} label="字号" value="11" />
          <Square $w={34} aria-label="增大字号"><S name="bigger" /></Square>
          <Square $w={16} aria-label="减小字号"><S name="smaller" /></Square>
        </Row>
        <Row>
          <Square $w={25}><Bold>B</Bold></Square>
          <Square $w={25} aria-label="斜体"><S name="italic" /></Square>
          <Square $w={25} aria-label="下划线"><S name="underline" /></Square>
          <Square $w={25} aria-label="删除线"><S name="strike" /></Square>
          {["border", "edit", "bucket", "fontcolor"].map((n) => (
            <SplitButton key={n} aria-label={n}><S name={n} /><Caret /></SplitButton>
          ))}
          <SplitButton $color={ink} aria-label="清除"><S name="eraser" /><Caret /></SplitButton>
        </Row>
      </Rows>
      <Launcher />
    </Group>
    <Group $left={4} $gap={13}>
      <Rows>
        {[["vtop", "vmid", "vbot", "outdent", "indent"], ["left", "center", "right", "justify", "spread"]].map((names) => (
          <Row key={names[0]}>
            {names.map((n) => <Square $w={25} key={n} aria-label={n}><S name={n} /></Square>)}
          </Row>
        ))}
      </Rows>
      <BigItem icon="merge" label="合并居中" off />
      <BigItem icon="wrap" label="自动换行" off caret={false} />
      <Launcher />
    </Group>
    <Group $left={5} $gap={7}>
      <Rows>
        <Row><Drop w={136} label="数字格式" value="常规" /></Row>
        <Row>
          <SplitButton $w={36} aria-label="货币"><S name="yen" /><Caret /></SplitButton>
          <Square $w={25} aria-label="百分比"><S name="percent" /></Square>
          <Square $w={25}><Decimal><span>000</span><span>,&nbsp;&nbsp;</span></Decimal></Square>
          <Square $w={25}><Decimal><span>←.0</span><span>.00</span></Decimal></Square>
          <Square $w={25}><Decimal><span>.00</span><span>→.0</span></Decimal></Square>
        </Row>
      </Rows>
      <BigItem icon="convert" label="类型转换" />
      <Launcher />
    </Group>
    <Group $right={8}>
      <BigItem icon="cond" label="条件格式" />
      <Rows>
        <TextButton $color={muted}><S name="tablestyle" />表格样式<Caret /></TextButton>
        <TextButton $color={muted}><S name="cellstyle" />单元格样式<Caret /></TextButton>
      </Rows>
    </Group>
    <Group $gap={12}>
      <BigItem icon="sum" label="求和" />
      <BigItem icon="filter" label="筛选" off />
      <BigItem icon="sort" label="排序" off />
      <BigItem icon="fill" label="填充" />
    </Group>
    <Group>
      <BigItem icon="cell" label="单元格" />
      <BigItem icon="rowcol" label="行和列" />
      <BigItem icon="sheet" label="工作表" />
    </Group>
    <Group><BigItem icon="freeze" label="冻结窗格" /></Group>
    <Group><BigItem icon="tools" label="表格工具" /></Group>
    <Group>
      <BigItem icon="find" label="查找" />
      <BigItem icon="omega" label="符号" />
    </Group>
  </Ribbon>
);

export default function App() {
  return (
    <Page>
      <GlobalStyle />
      <TitleBar>
        <DocTab $kind="home">首页</DocTab>
        <DocTab>
          <Icon>
            <path d="M0 0h9a7 8 0 0 1 0 16H0z" fill="#f6323e" stroke="none" />
            <path d="M7.500 14C3 13 2 10 2.500 7c2 .500 4 2 4.500 4 .500-3 0-6 2.500-9 2 3 1 6 0 8 1-1.500 2-2 3.500-2-.500 3-2 5.500-5.500 6z" fill="#fff" stroke="none" />
          </Icon>
          找稻壳模板
        </DocTab>
        <DocTab $kind="active">
          <Icon>
            <rect width="16" height="16" rx="2" fill="#16b04b" stroke="none" />
            <path d="M12.500 4H5.500C3.500 4 3.500 8 5.500 8h5c2 0 2 4 0 4h-7" stroke="#fff" strokeWidth="2" />
          </Icon>
          工作簿2.xlsx
          <Grow />
          <Icon w={12} color="#a9b2c8"><path d="M.500 1.500h11v7H.500zM6 8.500v3M3 11.500h6" /></Icon>
          <Dot />
        </DocTab>
        <Square $w={36} $h={30} aria-label="新建标签">
          <Icon w={13}><path d="M6.500 1v11M1 6.500h11" stroke="#414c66" strokeWidth="1.600" /></Icon>
        </Square>
        <WindowTools>
          <Square $w={37} aria-label="标签视图">
            <Icon w={25} h={15}>
              <path d="M.500.500h23v13H.500zM23.500 2.500h-7v11M19 11.500h2M9.500 4.500l2-1v7M9.500 10.500h4" />
            </Icon>
          </Square>
          <Square $w={24} aria-label="应用">
            <Icon w={15}><path d="M.500.500h5v5h-5zM8.500.500h5v5h-5zM.500 8.500h5v5h-5zM8.500 8.500h5v5h-5z" /></Icon>
          </Square>
          <Square $w={42} aria-label="账户">
            <Icon w={20}>
              <circle cx="10" cy="10" r="10" fill="#cfdfe4" stroke="none" />
              <path d="M7 19c0-4 1-6 4-7l3-1c1 3 0 6-1 8-2 1-4 1-6 0z" fill="#f1f6f8" stroke="none" />
              <path d="M10 5c2-2 5-1 6 1 1 3 1 7 0 9l-3 1c1-3 0-5-1-7z" fill="#4a3b42" stroke="none" />
              <circle cx="11" cy="8" r="2" fill="#ecccc0" stroke="none" />
            </Icon>
          </Square>
          <Divider $h={20} $gap={0} />
          <Square $w={32} aria-label="最小化"><Icon w={12}><path d="M1 6.500h10" /></Icon></Square>
          <Square $w={26} aria-label="还原"><Icon w={13}><path d="M.500 3.500h9v9h-9zM3.500 3.500v-3h9v9h-3" /></Icon></Square>
          <Square $w={28} aria-label="关闭"><Icon w={11}><path d="M.500.500l10 10M10.500.500l-10 10" /></Icon></Square>
        </WindowTools>
      </TitleBar>

      <MenuRow>
        <FileButton>
          <Icon w={14}><path d="M0 2.500h14M0 7.500h14M0 12.500h14" /></Icon>
          文件
          <S name="chevron" color="#9aa2b5" />
        </FileButton>
        <Divider />
        <QuickBar>
          {["save", "export", "print", "preview", "undo", "redo"].map((n) => (
            <Square key={n} aria-label={n} $color={n === "save" || n === "undo" ? ink : muted}><S name={n} /></Square>
          ))}
          <Square aria-label="更多"><Icon w={9} h={8}><path d="M0 .500h9M1 3.500h7L4.500 7z" /></Icon></Square>
        </QuickBar>
        <Divider />
        <MenuTabs>
          <MenuTab $on>开始</MenuTab>
          {["插入", "页面布局", "公式", "数据", "审阅", "视图", "开发工具", "会员专享", "效率"].map((t) => (
            <MenuTab key={t}>{t}</MenuTab>
          ))}
        </MenuTabs>
        <Search>
          <S name="search" />
          <SearchInput placeholder="查找命令、搜索模板" aria-label="查找命令" />
        </Search>
        <AccountTools>
          <TextButton><S name="cloud" color="#5d6780" />未上云</TextButton>
          <TextButton><S name="person" color="#5d6780" />协作</TextButton>
          <TextButton><S name="share" color="#5d6780" />分享</TextButton>
          <Divider $h={20} $gap={0} />
          <Square $w={14} aria-label="更多选项">
            <Icon w={2} h={12}><path d="M0 0h2v2H0zM0 5h2v2H0zM0 10h2v2H0z" fill="#4f5870" stroke="none" /></Icon>
          </Square>
          <Square $w={16} aria-label="折叠功能区"><S name="chevronUp" color="#5d6780" /></Square>
        </AccountTools>
      </MenuRow>

      <Ribbons />

      <Workspace>
        <SheetArea>
          <FormulaBar>
            <NameBox>
              <BoxInput $name aria-label="名称框" defaultValue="DATE" />
              <Caret />
            </NameBox>
            <FormulaButtons>
              <Square $w={26} aria-label="取消"><S name="close" /></Square>
              <Square $w={26} aria-label="输入"><S name="check" /></Square>
              <Square $w={26}><Fx>fx</Fx></Square>
            </FormulaButtons>
            <BoxInput aria-label="编辑栏" defaultValue="=ROUND（C11，0）" />
          </FormulaBar>
          <GridRow>
            <GridView>
              <Grid>
                <colgroup>
                  <col width="34" />
                  {columns.map((c) => <col key={c} width="72" />)}
                </colgroup>
                <thead>
                  <tr>
                    <ColHead>
                      <Icon w={30} h={18}><path d="M29 5v11H18z" fill="#b9bbc0" stroke="none" /></Icon>
                    </ColHead>
                    {columns.map((c) => <ColHead key={c} $on={c === "D"}>{c}</ColHead>)}
                  </tr>
                </thead>
                <tbody>
                  {Array.from({ length: rowCount }, (_, r) => (
                    <tr key={r}>
                      <RowHead $on={r === 10}>{r + 1}</RowHead>
                      {columns.map((c, i) => <SheetCell key={c} r={r} c={i} />)}
                    </tr>
                  ))}
                </tbody>
              </Grid>
            </GridView>
            <VScroll>
              <Grip />
              <VTrack>
                <Icon w={6} h={4}><path d="M0 4h6L3 0z" fill={slate} stroke="none" /></Icon>
                <VThumb />
                <Caret />
              </VTrack>
            </VScroll>
          </GridRow>
          <SheetBar>
            <SheetNav>
              {["first", "prev", "next", "last"].map((n) => <Square key={n} $h={20} aria-label={n}><S name={n} /></Square>)}
            </SheetNav>
            <SheetTab>Sheet1</SheetTab>
            <Square $h={20} aria-label="新建工作表"><S name="plus" /></Square>
            <Grow />
            <Grip $vertical />
            <HScroll>
              <Icon w={4} h={6}><path d="M4 0v6L0 3z" fill={slate} stroke="none" /></Icon>
              <HThumb />
              <Icon w={4} h={6}><path d="M0 0v6l4-3z" fill={slate} stroke="none" /></Icon>
            </HScroll>
            <Grip $vertical />
            <Divider $h={0} $gap={8} />
          </SheetBar>
        </SheetArea>

        <Pane>
          <PaneHead>
            <TextButton>选择窗格<Caret /></TextButton>
            <Grow />
            <Square aria-label="固定"><S name="pin" /></Square>
            <Square aria-label="关闭窗格"><S name="close" /></Square>
          </PaneHead>
          <PaneTitle>文档中的对象</PaneTitle>
          <ObjectList />
          <PaneRow>
            叠放次序
            <PaneButton $w={23} aria-label="上移"><S name="up" /></PaneButton>
            <PaneButton $w={23} aria-label="下移"><S name="down" /></PaneButton>
          </PaneRow>
          <PaneRow>
            <PaneButton>全部显示</PaneButton>
            <PaneButton>全部隐藏</PaneButton>
          </PaneRow>
        </Pane>
        <SideBar>
          <Handle />
          {["rocket", "pointer", "sliders", "layout", "shop", "bulb", "book"].map((n) => (
            <Square key={n} $w={36} $h={36} aria-label={n}><S name={n} /></Square>
          ))}
          <SideRule />
          <Square $h={16} aria-label="更多工具">
            <Icon w={16} h={6}><circle cx="2.500" cy="3" r="1.500" /><circle cx="8" cy="3" r="1.500" /><circle cx="13.500" cy="3" r="1.500" /></Icon>
          </Square>
        </SideBar>
      </Workspace>

      <StatusBar>
        <Divider $h={14} $gap={0} />
        <Square $w={46} aria-label="录制宏"><S name="record" /></Square>
        <Divider $h={14} $gap={0} />
        <Divider $h={0} $gap={5} />
        <span>输入状态</span>
        <Divider $h={0} $gap={10} />
        <span>在 11 个记录中筛选出 3 个</span>
        <Grow />
        <Square $on aria-label="护眼模式"><S name="eye" /></Square>
        <SplitButton $color={ink} aria-label="阅读模式"><S name="cross" /><Caret /></SplitButton>
        <Divider $h={14} $gap={9} />
        <Square $on aria-label="普通视图"><S name="grid" /></Square>
        <Square $w={30} aria-label="页面布局视图"><S name="reading" /></Square>
        <Square $w={24} aria-label="分页预览"><S name="pagebreak" /></Square>
        <Divider $h={14} $gap={9} />
        <Zoom>100%<Caret /></Zoom>
        <Square aria-label="缩小"><Icon w={10}><path d="M0 5h10" strokeWidth="2" /></Icon></Square>
        <Slider type="range" aria-label="缩放" min={0} max={100} defaultValue={45} />
        <Square $w={16} aria-label="放大"><Icon w={10}><path d="M0 5h10M5 0v10" strokeWidth="2" /></Icon></Square>
        <Square $w={30} aria-label="全屏"><S name="expand" /></Square>
      </StatusBar>

      <ImeBar>
        <ImeLogo>
          <Icon w={34}>
            <path d="M3 6L28 1l5 24-24 6c-3 0-4-2-4-4z" fill="#f4511e" stroke="none" />
            <path d="M27 8c-8-2-17-1-17 4 0 6 16 2 16 8 0 5-12 5-18 2" stroke="#fff" strokeWidth="4" />
          </Icon>
        </ImeLogo>
        <ImeKey>中</ImeKey>
        <ImeKey aria-label="标点">
          <Icon><circle cx="4" cy="5" r="2" strokeWidth="1.500" /><path d="M10 7h4v4l-3 3h-1l1.500-3H10z" fill="currentColor" stroke="none" /></Icon>
        </ImeKey>
        <ImeKey aria-label="语音">
          <Icon><rect x="5" y="0" width="6" height="10" rx="3" fill="currentColor" stroke="none" /><path d="M2.500 7c0 6 11 6 11 0M8 12v4M5 15h6" strokeWidth="1.600" /></Icon>
        </ImeKey>
        <ImeKey aria-label="键盘">
          <Icon><rect x="1" y="2" width="14" height="12" rx="1" strokeWidth="1.600" /><path d="M3 5.500h10M3 8.500h10" strokeWidth="1.500" strokeDasharray="2 1" /><path d="M5 11.500h6" strokeWidth="1.500" /></Icon>
        </ImeKey>
        <ImeApps aria-label="工具箱">
          <Icon w={14}>
            <g stroke="none"><rect width="6" height="6" rx="1.500" fill="#5a7cf5" /><rect x="8" width="6" height="6" rx="2" fill="#6a5ff2" /><rect y="8" width="6" height="6" rx="1.500" fill="#a766c9" /><rect x="8" y="8" width="6" height="6" rx="1.500" fill="#5467ee" /><circle cx="11" cy="3" r="1.200" fill="#fff" /></g>
          </Icon>
        </ImeApps>
      </ImeBar>

      <SideWidget><Meter /></SideWidget>

      <Watermark>
        <Icon w={44} h={42}>
          <g stroke="none">
            <path d="M43 1C22-1 4 10 1 27c1 7 7 9 11 8C6 22 20 7 43 1z" fill="#4ea3df" />
            <path d="M16 20C22 14 33 12 38 17c6 8-4 17-12 20 5-7 7-14 1-18-4-1-8-1-11 1z" fill="#57ba70" />
            <path d="M15 31c-3-6 4-12 10-9-5 0-6 5-3 8 0 0-4 3-7 1z" fill="#4ea3df" />
            <path d="M9 36c7 1 13-2 18-5-2 7-9 10-18 5z" fill="#d5d94c" />
          </g>
        </Icon>
        <WatermarkText>
          极光下载站
          <WatermarkUrl>www.xz7.com</WatermarkUrl>
        </WatermarkText>
      </Watermark>

      <Notes aria-hidden="true">
        <Arrow tail={[251, 92]} tip={[214, 149]} />
        <Arrow tail={[173, 454]} tip={[193, 408]} />
        <Arrow tail={[299, 474]} tip={[324, 406]} />
        <Arrow tail={[381, 467]} tip={[366, 404]} />
      </Notes>
    </Page>
  );
}
